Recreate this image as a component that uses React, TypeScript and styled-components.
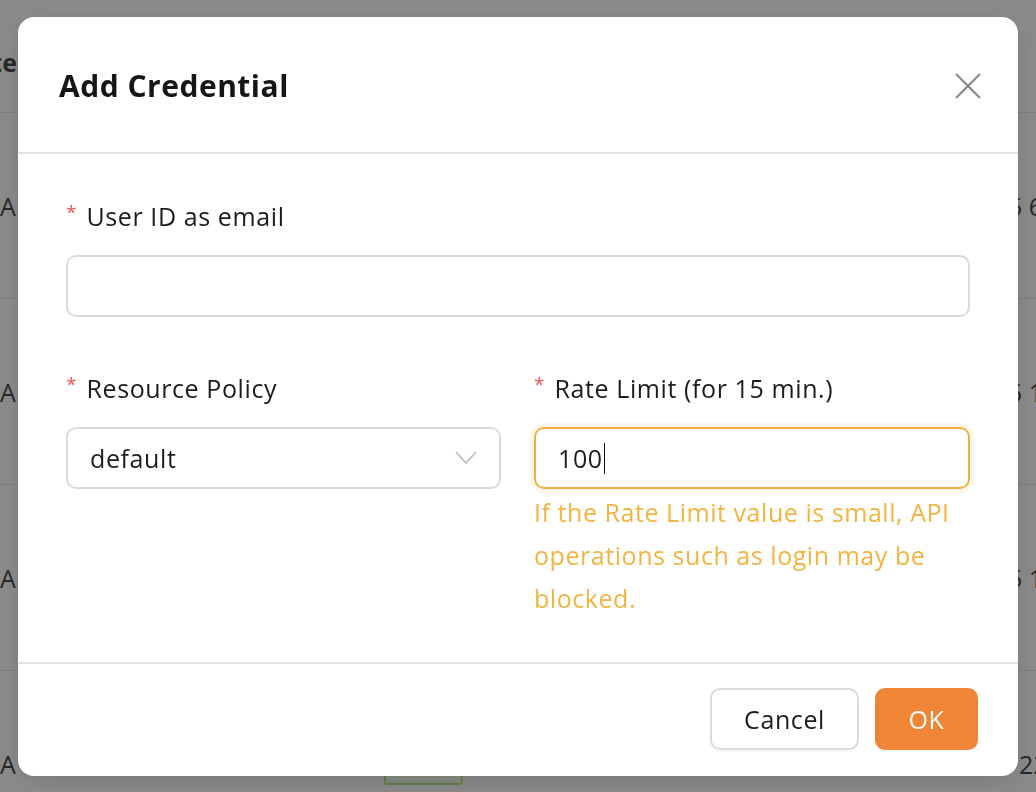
import React from 'react';
import styled, { createGlobalStyle } from 'styled-components';

const Global = createGlobalStyle`
  html, body { margin: 0; padding: 0; background: #fff; }
  body { font-family: "Open Sans", "Noto Sans", sans-serif; color: #1c1c1c; }
  * { box-sizing: border-box; }
`;

/* ---------- background page ---------- */
const Page = styled.div`
  width: 1036px;
  height: 792px;
  overflow: hidden;
  background: #fff;
`;

const Row = styled.div<{ $h: number }>`
  height: ${(p) => p.$h}px;
  border-bottom: 1px solid #e9e9e9;
  display: flex;
  align-items: center;
  font-size: 25px;
  color: #4a4a4a;
  white-space: nowrap;
`;

const HeaderCell = styled.div`
  width: 17px;
  overflow: hidden;
  display: flex;
  justify-content: flex-end;
  font-weight: 700;
  padding-top: 12px;
`;

const LeftText = styled.div`
  flex: none;
  width: 17px;
  overflow: hidden;
`;

const MidCell = styled.div`
  flex: none;
  width: 997px;
  padding-left: 367px;
  display: flex;
  align-items: center;
`;

const Tag = styled.div`
  width: 79px;
  height: 42px;
  border: 2px solid #b7eb8f;
  background: #f6ffed;
  border-radius: 3px;
`;

const RightCell = styled.div<{ $shift: number }>`
  flex: none;
  margin-left: ${(p) => p.$shift}px;
`;

/* ---------- modal ---------- */
const Overlay = styled.div`
  position: fixed;
  inset: 0;
  background: rgba(0, 0, 0, 0.46);
  display: flex;
  justify-content: center;
  align-items: flex-start;
  padding-top: 17px;
`;

const Modal = styled.div`
  width: 1000px;
  background: #fff;
  border-radius: 16px;
  box-shadow: 0 6px 24px rgba(0, 0, 0, 0.12);
  display: flex;
  flex-direction: column;
`;

const Header = styled.div`
  height: 137px;
  border-bottom: 2px solid #e2e2e2;
  display: flex;
  align-items: center;
  justify-content: space-between;
  padding: 2px 37px 0 41px;
`;

const Title = styled.h2`
  margin: 0;
  font-size: 30px;
  font-weight: 700;
  color: #161616;
  letter-spacing: 0.5px;
`;

const CloseButton = styled.button`
  width: 26px;
  height: 26px;
  padding: 0;
  border: none;
  background: transparent;
  display: flex;
  align-items: center;
  justify-content: center;
  cursor: pointer;
`;

const Body = styled.div`
  padding: 43px 48px 42px;
  display: flex;
  flex-direction: column;
  gap: 52px;
`;

const Columns = styled.div`
  display: grid;
  grid-template-columns: 435px 436px;
  column-gap: 33px;
`;

const Field = styled.div`
  display: flex;
  flex-direction: column;
`;

const Label = styled.label`
  height: 38px;
  display: flex;
  align-items: center;
  font-size: 25px;
  font-weight: 500;
  letter-spacing: 0.6px;
  color: #1c1c1c;
  margin-bottom: 20px;
`;

const Required = styled.span`
  color: #ef5350;
  font-size: 19px;
  margin-right: 10px;
  transform: translateY(-4px);
  letter-spacing: 0;
`;

const Box = styled.div<{ $focus?: boolean }>`
  height: 62px;
  border: 2px solid ${(p) => (p.$focus ? '#f0b040' : '#dadada')};
  border-radius: 10px;
  box-shadow: ${(p) => (p.$focus ? '0 0 0 4px rgba(240, 176, 64, 0.1)' : 'none')};
  display: flex;
  align-items: center;
  justify-content: space-between;
  padding: 0 22px;
  font-size: 25px;
  font-weight: 500;
  letter-spacing: 0.6px;
  color: #1c1c1c;
`;

const Value = styled.span`
  display: flex;
  align-items: center;
`;

const Caret = styled.span`
  width: 1.5px;
  height: 31px;
  background: #111;
  margin-left: 1px;
`;

const Help = styled.div`
  margin-top: 2px;
  font-size: 25px;
  font-weight: 500;
  line-height: 43px;
  letter-spacing: 0.55px;
  color: #f2b440;
`;

const Footer = styled.div`
  border-top: 2px solid #e2e2e2;
  padding: 24px 40px 26px;
  display: flex;
  justify-content: flex-end;
  gap: 16px;
`;

const Button = styled.button<{ $primary?: boolean }>`
  height: 62px;
  min-width: ${(p) => (p.$primary ? '103px' : '149px')};
  padding: 0 26px;
  border-radius: 10px;
  border: 2px solid ${(p) => (p.$primary ? '#ef8535' : '#dadada')};
  background: ${(p) => (p.$primary ? '#ef8535' : '#fff')};
  color: ${(p) => (p.$primary ? '#fff' : '#1c1c1c')};
  font-family: "Open Sans", "Noto Sans", sans-serif;
  font-size: 25px;
  font-weight: 500;
  letter-spacing: 0.6px;
  box-shadow: 0 2px 0 rgba(0, 0, 0, 0.02);
  cursor: pointer;
`;

const rows = [
  { right: '5 6:30', shift: -6 },
  { right: '5 10:12', shift: -6 },
  { right: '5 11:45', shift: -6 },
  { right: '22:01', shift: 5, tag: true },
];

export default function App() {
  return (
    <>
      <Global />
      <Page>
        <Row $h={113}>
          <HeaderCell>Date</HeaderCell>
        </Row>
        {rows.map((r, i) => (
          <Row key={i} $h={186}>
            <LeftText>AKIAJ</LeftText>
            <MidCell>{r.tag && <Tag />}</MidCell>
            <RightCell $shift={r.shift}>{r.right}</RightCell>
          </Row>
        ))}
      </Page>
      <Overlay>
        <Modal role="dialog" aria-labelledby="dlg-title">
          <Header>
            <Title id="dlg-title">Add Credential</Title>
            <CloseButton aria-label="Close">
              <svg width="26" height="26" viewBox="0 0 26 26">
                <path d="M1 1 L25 25 M25 1 L1 25" stroke="#8a8a8a" strokeWidth="2.2" strokeLinecap="butt" />
              </svg>
            </CloseButton>
          </Header>
          <Body>
            <Field>
              <Label>
                <Required>*</Required>User ID as email
              </Label>
              <Box />
            </Field>
            <Columns>
              <Field>
                <Label>
                  <Required>*</Required>Resource Policy
                </Label>
                <Box>
                  <Value>default</Value>
                  <svg width="22" height="14" viewBox="0 0 22 14">
                    <path d="M1 1 L11 12 L21 1" fill="none" stroke="#bdbdbd" strokeWidth="1.6" />
                  </svg>
                </Box>
              </Field>
              <Field>
                <Label>
                  <Required>*</Required>Rate Limit (for 15 min.)
                </Label>
                <Box $focus>
                  <Value>
                    100
                    <Caret />
                  </Value>
                </Box>
                <Help>If the Rate Limit value is small, API operations such as login may be blocked.</Help>
              </Field>
            </Columns>
          </Body>
          <Footer>
            <Button>Cancel</Button>
            <Button $primary>OK</Button>
          </Footer>
        </Modal>
      </Overlay>
    </>
  );
}
